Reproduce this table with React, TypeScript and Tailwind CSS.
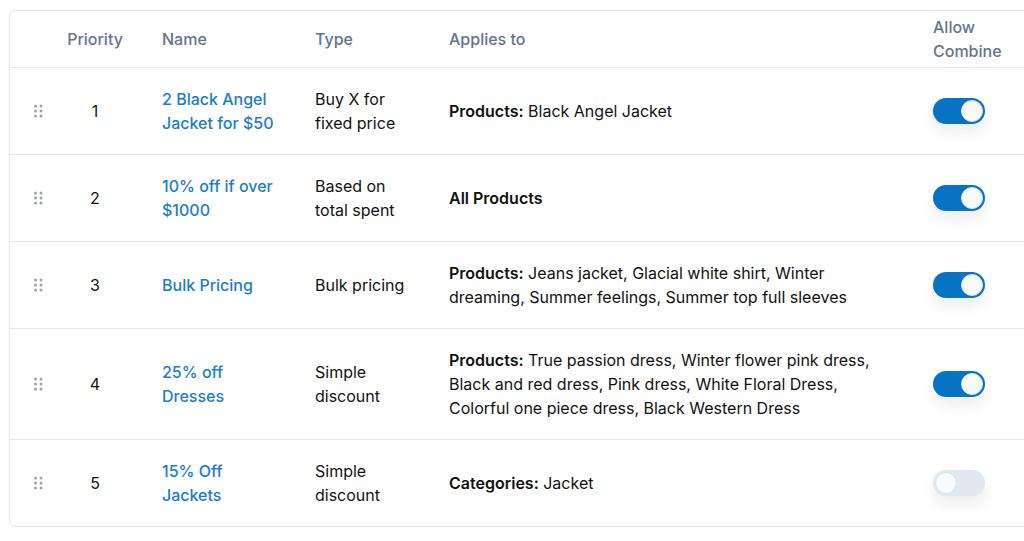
import React from "react";

type Rule = {
    priority: number;
    name: string;
    type: string;
    label: string;
    items?: string;
    combine: boolean;
};

const rules: Rule[] = [
    { priority: 1, name: "2 Black Angel Jacket for $50", type: "Buy X for fixed price", label: "Products:", items: "Black Angel Jacket", combine: true },
    { priority: 2, name: "10% off if over $1000", type: "Based on total spent", label: "All Products", combine: true },
    { priority: 3, name: "Bulk Pricing", type: "Bulk pricing", label: "Products:", items: "Jeans jacket, Glacial white shirt, Winter dreaming, Summer feelings, Summer top full sleeves", combine: true },
    { priority: 4, name: "25% off Dresses", type: "Simple discount", label: "Products:", items: "True passion dress, Winter flower pink dress, Black and red dress, Pink dress, White Floral Dress, Colorful one piece dress, Black Western Dress", combine: true },
    { priority: 5, name: "15% Off Jackets", type: "Simple discount", label: "Categories:", items: "Jacket", combine: false },
];

const DragHandle = () => (
    <svg width="9" height="14" viewBox="0 0 9 14" className="block">
        {[1.5, 7].map((x) =>
            [2, 7, 12].map((y) => (
                <circle key={`${x}-${y}`} cx={x} cy={y} r="1.5" fill="#9ca3af" />
            )),
        )}
    </svg>
);

const Toggle = ({ on }: { on: boolean }) => (
    <div
        className={`relative w-[52px] h-[26px] rounded-full shadow-[0_8px_14px_rgba(15,23,42,0.08)] ${
            on ? "bg-[#0873c2]" : "bg-[#e2e8f0]"
        }`}
    >
        <div
            className={`absolute top-[2px] w-[22px] h-[22px] rounded-full bg-[#f8fafc] border border-[#dbe3ec] ${
                on ? "left-[28px]" : "left-[2px]"
            }`}
        />
    </div>
);

export default function App() {
    return (
        <div
            className="w-[1024px] h-[541px] overflow-hidden bg-white pl-[9px] pt-[10px]"
            style={{ fontFamily: "Inter, 'Noto Sans', sans-serif" }}
        >
            <div className="w-[1060px] border border-[#e2e8f0] rounded-md text-[16px] leading-6 text-[#111]">
                <table className="table-fixed border-collapse w-[1058px]">
                    <colgroup>
                        <col className="w-[48px]" />
                        <col className="w-[104px]" />
                        <col className="w-[153px]" />
                        <col className="w-[134px]" />
                        <col className="w-[484px]" />
                        <col />
                    </colgroup>
                    <thead>
                        <tr className="h-[56px] text-[#64748b] text-left">
                            <th className="font-medium" />
                            <th className="font-medium pl-[9px] pr-[39px] text-center">Priority</th>
                            <th className="font-medium">Name</th>
                            <th className="font-medium">Type</th>
                            <th className="font-medium">Applies to</th>
                            <th className="font-medium pr-[20px]">
                                <div className="w-[90px]">Allow Combine</div>
                            </th>
                        </tr>
                    </thead>
                    <tbody>
                        {rules.map((r) => (
                            <tr key={r.priority} className="border-t border-[#e2e8f0]">
                                <td className="py-[19px] pl-[24px] align-middle">
                                    <DragHandle />
                                </td>
                                <td className="py-[19px] pl-[9px] pr-[39px] text-center">{r.priority}</td>
                                <td className="py-[19px] pr-[30px] text-[#1b7dc9] font-medium">{r.name}</td>
                                <td className="py-[19px] pr-[30px]">{r.type}</td>
                                <td className="py-[19px] pr-[44px]">
                                    <span className="font-semibold">{r.label}</span>
                                    {r.items ? ` ${r.items}` : null}
                                </td>
                                <td className="py-[19px]">
                                    <Toggle on={r.combine} />
                                </td>
                            </tr>
                        ))}
                    </tbody>
                </table>
            </div>
        </div>
    );
}
